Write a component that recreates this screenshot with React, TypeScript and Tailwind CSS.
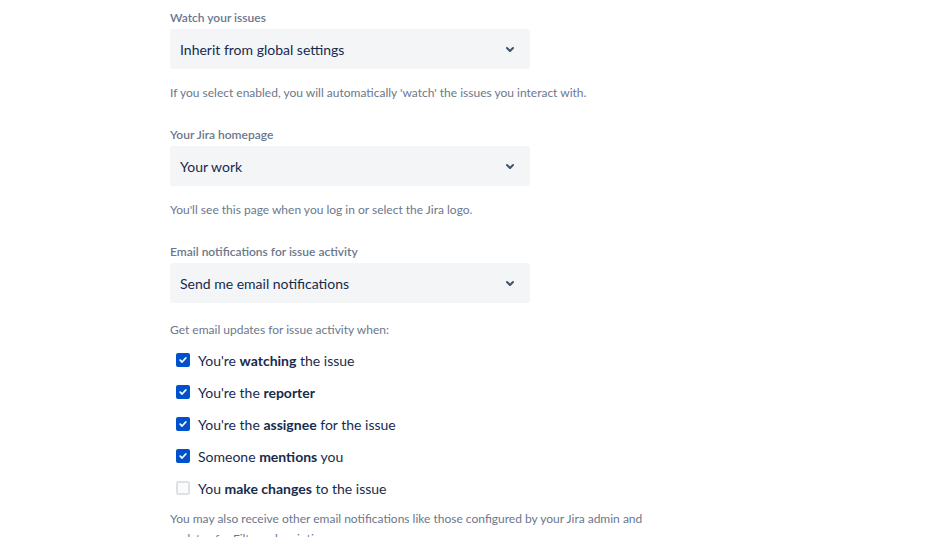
import React from "react";

const font = { fontFamily: '"Segoe UI", Lato, "Noto Sans", sans-serif' };

function Chevron() {
  return (
    <svg width="24" height="24" viewBox="0 0 24 24" className="text-[#42526E]">
      <path
        d="M8.292 10.293a1.009 1.009 0 0 0 0 1.419l2.939 2.965c.218.215.5.322.779.322s.556-.107.769-.322l2.93-2.955a1.01 1.01 0 0 0 0-1.419.987.987 0 0 0-1.406 0l-2.298 2.317-2.307-2.327a.99.99 0 0 0-1.406 0z"
        fill="currentColor"
      />
    </svg>
  );
}

function Field({ label, value, helper }: { label: string; value: string; helper?: string }) {
  return (
    <div>
      <div className="text-[12px] font-semibold leading-4 text-[#6B778C]">{label}</div>
      <div className="mt-[3px] flex h-10 w-[360px] items-center justify-between rounded-[3px] bg-[#F4F5F7] pl-[10px] pr-2">
        <span className="text-[14px] text-[#172B4D]">{value}</span>
        <Chevron />
      </div>
      {helper && <p className="mt-4 text-[12px] leading-4 text-[#6B778C]">{helper}</p>}
    </div>
  );
}

function Check({ checked, children }: { checked: boolean; children: React.ReactNode }) {
  return (
    <label className="flex h-8 items-center gap-2 pl-[6px] text-[14px] text-[#172B4D]">
      {checked ? (
        <span className="flex h-[14px] w-[14px] items-center justify-center rounded-[2px] bg-[#0052CC]">
          <svg width="10" height="10" viewBox="0 0 10 10">
            <path d="M2.2 5.2l1.9 1.8 3.7-4" stroke="white" strokeWidth="1.8" fill="none" strokeLinecap="round" strokeLinejoin="round" />
          </svg>
        </span>
      ) : (
        <span className="h-[14px] w-[14px] rounded-[2px] border-2 border-[#DFE1E6] bg-[#FAFBFC]" />
      )}
      <span>{children}</span>
    </label>
  );
}

export default function App() {
  return (
    <div className="min-h-screen bg-white" style={font}>
      <div className="ml-[170px] w-[490px] pt-[10px]">
        <Field
          label="Watch your issues"
          value="Inherit from global settings"
          helper="If you select enabled, you will automatically 'watch' the issues you interact with."
        />
        <div className="mt-[26px]">
          <Field
            label="Your Jira homepage"
            value="Your work"
            helper="You'll see this page when you log in or select the Jira logo."
          />
        </div>
        <div className="mt-[26px]">
          <Field label="Email notifications for issue activity" value="Send me email notifications" />
        </div>
        <p className="mt-[19px] text-[12px] leading-4 text-[#6B778C]">Get email updates for issue activity when:</p>
        <div className="mt-[6px]">
          <Check checked>
            You're <b className="font-bold">watching</b> the issue
          </Check>
          <Check checked>
            You're the <b className="font-bold">reporter</b>
          </Check>
          <Check checked>
            You're the <b className="font-bold">assignee</b> for the issue
          </Check>
          <Check checked>
            Someone <b className="font-bold">mentions</b> you
          </Check>
          <Check checked={false}>
            You <b className="font-bold">make changes</b> to the issue
          </Check>
        </div>
        <p className="mt-[5px] text-[12px] leading-5 text-[#6B778C]">
          You may also receive other email notifications like those configured by your Jira admin and updates for Filter subscriptions.
        </p>
      </div>
    </div>
  );
}
